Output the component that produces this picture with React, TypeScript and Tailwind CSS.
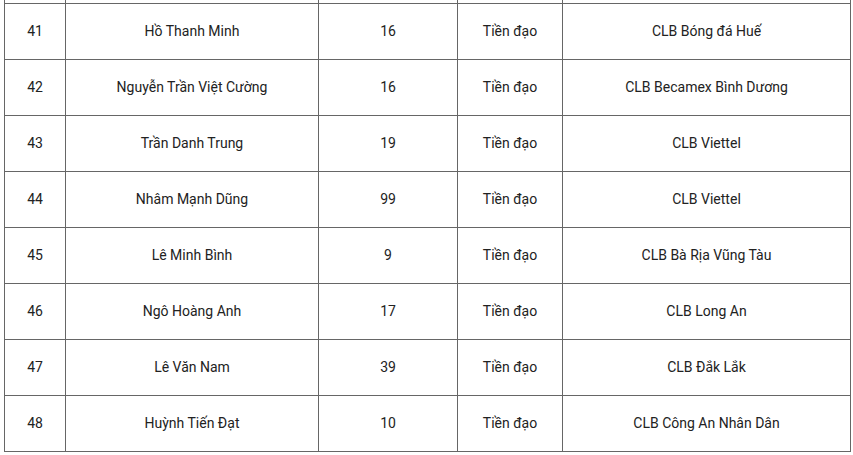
const rows = [
  { no: '41', name: 'Hồ Thanh Minh', num: '16', pos: 'Tiền đạo', club: 'CLB Bóng đá Huế' },
  { no: '42', name: 'Nguyễn Trần Việt Cường', num: '16', pos: 'Tiền đạo', club: 'CLB Becamex Bình Dương' },
  { no: '43', name: 'Trần Danh Trung', num: '19', pos: 'Tiền đạo', club: 'CLB Viettel' },
  { no: '44', name: 'Nhâm Mạnh Dũng', num: '99', pos: 'Tiền đạo', club: 'CLB Viettel' },
  { no: '45', name: 'Lê Minh Bình', num: '9', pos: 'Tiền đạo', club: 'CLB Bà Rịa Vũng Tàu' },
  { no: '46', name: 'Ngô Hoàng Anh', num: '17', pos: 'Tiền đạo', club: 'CLB Long An' },
  { no: '47', name: 'Lê Văn Nam', num: '39', pos: 'Tiền đạo', club: 'CLB Đắk Lắk' },
  { no: '48', name: 'Huỳnh Tiến Đạt', num: '10', pos: 'Tiền đạo', club: 'CLB Công An Nhân Dân' },
]

const cols = 'grid grid-cols-[61px_253px_139px_105px_289px]'

export default function App() {
  return (
    <div
      className="w-[853px] h-[455px] bg-white pl-[4px] text-[14px] text-[#222]"
      style={{ fontFamily: 'Roboto, "Noto Sans", Arial, sans-serif' }}
    >
      {/* tail of the previous row */}
      <div className={`${cols} h-[3px]`}>
        {[0, 1, 2, 3, 4].map((i) => (
          <div key={i} className={`border-l border-[#666] ${i === 4 ? 'border-r' : ''}`} />
        ))}
      </div>
      {rows.map((r, ri) => (
        <div key={r.no} className={`${cols} h-[56px] ${ri === rows.length - 1 ? 'h-[57px]' : ''}`}>
          {[r.no, r.name, r.num, r.pos, r.club].map((v, i) => (
            <div
              key={i}
              className={`flex items-center justify-center border-l border-t border-[#666] ${
                i === 4 ? 'border-r' : ''
              } ${ri === rows.length - 1 ? 'border-b' : ''}`}
            >
              {v}
            </div>
          ))}
        </div>
      ))}
    </div>
  )
}
